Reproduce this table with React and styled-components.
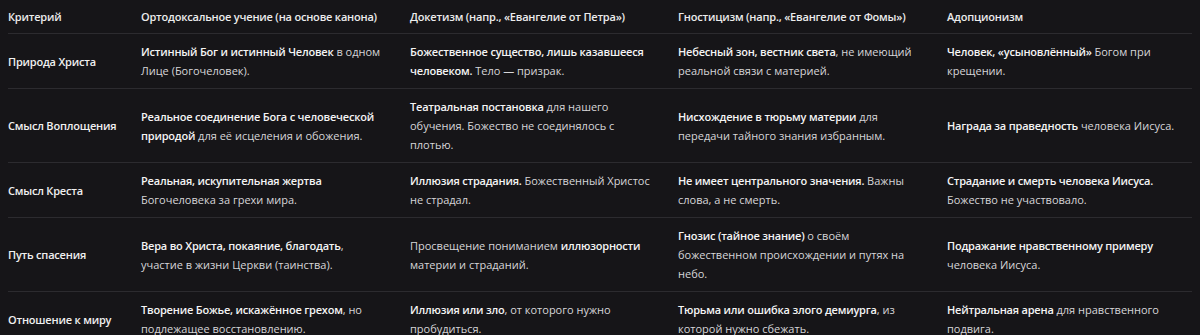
import styled, { createGlobalStyle } from "styled-components";

const GlobalStyle = createGlobalStyle`
    body{
        margin:0;
        background:#161518;
        font-family:"Open Sans","Noto Sans",sans-serif;
    }
`;

//Column headers of the comparison table
const headers = [
    "Критерий",
    "Ортодоксальное учение (на основе канона)",
    "Докетизм (напр., «Евангелие от Петра»)",
    "Гностицизм (напр., «Евангелие от Фомы»)",
    "Адопционизм",
];

//Each cell is a list of [bold, text] pieces
const rows = [
    {
        title: "Природа Христа",
        cells: [
            [[true, "Истинный Бог и истинный Человек"], [false, " в одном Лице (Богочеловек)."]],
            [[true, "Божественное существо, лишь казавшееся человеком."], [false, " Тело — призрак."]],
            [[true, "Небесный зон, вестник света"], [false, ", не имеющий реальной связи с материей."]],
            [[true, "Человек, «усыновлённый»"], [false, " Богом при крещении."]],
        ],
    },
    {
        title: "Смысл Воплощения",
        cells: [
            [[true, "Реальное соединение Бога с человеческой природой"], [false, " для её исцеления и обожения."]],
            [[true, "Театральная постановка"], [false, " для нашего обучения. Божество не соединялось с плотью."]],
            [[true, "Нисхождение в тюрьму материи"], [false, " для передачи тайного знания избранным."]],
            [[true, "Награда за праведность"], [false, " человека Иисуса."]],
        ],
    },
    {
        title: "Смысл Креста",
        cells: [
            [[true, "Реальная, искупительная жертва"], [false, " Богочеловека за грехи мира."]],
            [[true, "Иллюзия страдания."], [false, " Божественный Христос не страдал."]],
            [[true, "Не имеет центрального значения."], [false, " Важны слова, а не смерть."]],
            [[true, "Страдание и смерть человека Иисуса."], [false, " Божество не участвовало."]],
        ],
    },
    {
        title: "Путь спасения",
        cells: [
            [[true, "Вера во Христа, покаяние, благодать"], [false, ", участие в жизни Церкви (таинства)."]],
            [[false, "Просвещение пониманием "], [true, "иллюзорности"], [false, " материи и страданий."]],
            [[true, "Гнозис (тайное знание)"], [false, " о своём божественном происхождении и путях на небо."]],
            [[true, "Подражание нравственному примеру"], [false, " человека Иисуса."]],
        ],
    },
    {
        title: "Отношение к миру",
        cells: [
            [[true, "Творение Божье, искажённое грехом"], [false, ", но подлежащее восстановлению."]],
            [[true, "Иллюзия или зло"], [false, ", от которого нужно пробудиться."]],
            [[true, "Тюрьма или ошибка злого демиурга"], [false, ", из которой нужно сбежать."]],
            [[true, "Нейтральная арена"], [false, " для нравственного подвига."]],
        ],
    },
];

//Right padding per column, so the lines wrap where the original does
const padRight = [8, 27, 24, 16, 4];

const App = () => {
    return (
        <Page>
            <GlobalStyle />
            <Table>
                <Row>
                    {headers.map((h, i) => (
                        <HeadCell key={i} $pad={padRight[i]}>{h}</HeadCell>
                    ))}
                </Row>
                {rows.map((row, i) => (
                    <Row key={i}>
                        <TitleCell $pad={padRight[0]}>{row.title}</TitleCell>
                        {row.cells.map((cell, j) => (
                            <Cell key={j} $pad={padRight[j + 1]}>
                                {cell.map(([bold, text], k) =>
                                    bold ? <strong key={k}>{text}</strong> : <span key={k}>{text}</span>
                                )}
                            </Cell>
                        ))}
                    </Row>
                ))}
            </Table>
        </Page>
    );
};

export default App;

const Page = styled.div`
    padding:0 8px;
    height:335px;
    overflow:hidden;
`;

const Table = styled.div`
    display:flex;
    flex-direction:column;
`;

const Row = styled.div`
    display:grid;
    grid-template-columns:133px 269px 268px 269px 245px;
    align-items:center;
    border-bottom:1px solid #2c2b2f;
`;

const HeadCell = styled.div`
    padding:7px ${(props) => props.$pad}px 7px 0;
    font-size:11px;
    line-height:19px;
    font-weight:600;
    letter-spacing:-0.2px;
    color:#ececec;
`;

const Cell = styled.div`
    padding:8px ${(props) => props.$pad}px 8px 0;
    font-size:11px;
    line-height:19px;
    color:#d6d6d8;

    strong{
        font-weight:600;
        letter-spacing:-0.2px;
        color:#f4f4f4;
    }
`;

const TitleCell = styled(Cell)`
    font-weight:600;
    letter-spacing:-0.2px;
    color:#f0f0f0;
`;
